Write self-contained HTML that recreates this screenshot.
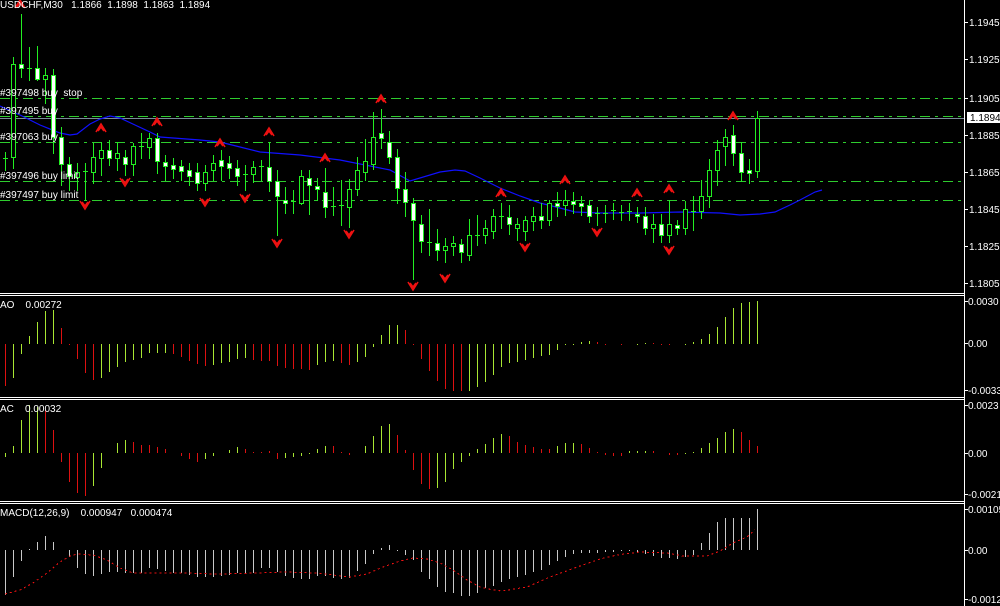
<!DOCTYPE html>
<html><head><meta charset="utf-8">
<style>
html,body{margin:0;padding:0;background:#000;width:1000px;height:606px;overflow:hidden}
svg{display:block}
text{font-family:"Liberation Sans",sans-serif;font-size:10px;fill:#fff;white-space:pre}
</style></head>
<body>
<svg id="s" width="1000" height="606" viewBox="0 0 1000 606" xmlns="http://www.w3.org/2000/svg" shape-rendering="crispEdges" xml:space="preserve">
<rect width="1000" height="606" fill="#000"/>
<g id="g"></g>
<text x="0" y="8">USDCHF,M30   1.1866  1.1898  1.1863  1.1894</text>
<g>
<text x="0" y="96">#397498 buy  stop</text>
<text x="0" y="114">#397495 buy</text>
<text x="0" y="140">#397063 buy</text>
<text x="0" y="179">#397496 buy limit</text>
<text x="0" y="198">#397497 buy limit</text>
<text x="0" y="308">AO    0.00272</text>
<text x="0" y="412">AC    0.00032</text>
<text x="0" y="516">MACD(12,26,9)    0.000947   0.000474</text>
</g>
<rect x="967" y="112" width="33" height="11" fill="#fff"/>
<text x="970" y="121">1.1894</text>
<g>
<text x="969" y="26">1.1945</text>
<text x="969" y="63">1.1925</text>
<text x="969" y="102">1.1905</text>
<text x="969" y="139">1.1885</text>
<text x="969" y="176">1.1865</text>
<text x="969" y="213">1.1845</text>
<text x="969" y="250">1.1825</text>
<text x="969" y="287">1.1805</text>
<text x="968" y="305">0.0030</text>
<text x="968" y="347">0.00</text>
<text x="968" y="394">-0.0033</text>
<text x="968" y="409">0.0023</text>
<text x="968" y="457">0.00</text>
<text x="968" y="498">-0.0021</text>
<text x="968" y="513">0.00105</text>
<text x="968" y="554">0.00</text>
<text x="968" y="603">-0.0012</text>
</g>
</svg>
<script>
document.querySelectorAll('text')[document.querySelectorAll('text').length-18].style.fill='#000';
var g=document.getElementById('g'),h='';
function L(x1,y1,x2,y2,c,extra){h+='<line x1="'+x1+'" y1="'+y1+'" x2="'+x2+'" y2="'+y2+'" stroke="'+c+'" stroke-width="1" '+(extra||'')+'/>';}
[293.5,295.5,397.5,399.5,501.5,503.5].forEach(function(y){L(0,y,964,y,'#fff');});
L(964.5,0,964.5,606,'#fff');
[22,59,98,135,172,209,246,283,301,343,390,405,453,494,509,550,599].forEach(function(y){L(965,y+0.5,968,y+0.5,'#fff');});
[98,116,142,181,200].forEach(function(y){L(0,y+0.5,964,y+0.5,'#2ecc2e','stroke-dasharray="10 5 3 5"');});
L(0,118.5,964,118.5,'#7a8a9a');
var ma=[[0,106],[20,115],[40,125],[60,133],[70,135],[77,134],[90,124],[100,119],[110,116],[120,118],[135,125],[150,132],[160,137],[200,140],[220,142],[240,147],[260,152],[300,155],[340,160],[390,170],[410,181],[440,172],[455,170],[465,171],[480,178],[500,188],[520,196],[540,203],[560,208],[575,212],[600,213],[640,213],[680,212],[720,213],[740,215],[760,214],[775,212],[790,205],[800,200],[815,192],[822,190]];
h+='<polyline fill="none" stroke="#1010ff" stroke-width="1.2" shape-rendering="auto" points="'+ma.map(function(p){return p.join(',')}).join(' ')+'"/>';
var C=[['d',158,158,152,170],['b',64,157,57,168],['w',64,68,14,77],['d',68,68,47,80],['w',68,79,46,80],['b',75,79,68,103],['w',75,137,69,153],['w',137,164,127,185],['w',164,176,157,190],['b',172,177,163,190],['d',171,171,163,200],['b',157,172,143,183],['b',150,158,142,175],['w',150,158,140,165],['b',153,158,142,170],['w',157,164,150,175],['b',146,164,143,175],['d',146,146,133,158],['b',138,147,133,158],['w',138,161,133,173],['w',162,166,155,180],['w',165,169,158,178],['w',166,171,160,180],['w',170,176,163,185],['w',172,183,163,190],['b',172,183,165,190],['b',163,170,155,180],['w',160,166,150,180],['w',163,168,156,178],['w',168,176,160,185],['d',174,174,165,190],['b',167,174,161,182],['d',166,166,160,180],['w',167,181,142,191],['w',181,196,170,235],['w',200,203,187,213],['d',201,201,190,213],['b',176,203,170,204],['w',178,185,170,214],['w',186,189,178,200],['w',192,207,168,217],['d',206,206,187,215],['d',205,205,180,225],['b',189,207,179,227],['b',170,189,157,195],['b',161,172,139,180],['b',137,164,112,169],['w',133,138,109,148],['w',142,157,131,163],['w',157,188,149,203],['w',189,202,172,216],['w',203,220,198,279],['w',224,241,215,252],['d',242,242,209,255],['w',243,250,229,260],['b',246,250,238,262],['b',243,246,236,255],['w',244,252,239,262],['b',235,255,219,260],['d',235,235,215,245],['b',228,235,220,243],['b',216,231,209,238],['d',216,216,203,228],['w',217,224,205,234],['b',224,228,218,240],['b',220,231,216,240],['b',216,221,207,230],['w',216,220,203,228],['b',203,220,200,225],['w',203,206,192,216],['b',200,205,190,215],['w',201,204,192,213],['w',203,206,196,215],['w',205,216,200,222],['d',213,213,207,225],['d',213,213,205,222],['d',210,210,203,219],['d',212,212,205,220],['d',211,211,203,220],['w',214,216,207,222],['w',216,228,207,234],['b',224,228,214,242],['w',224,235,214,242],['b',224,235,200,242],['w',225,228,220,234],['b',209,228,201,234],['d',211,211,196,230],['b',196,211,180,218],['b',170,196,159,207],['b',150,170,140,185],['b',137,146,129,165],['w',135,153,125,165],['w',153,172,142,181],['w',170,173,159,183],['b',118,171,111,177]];
var G='#22ee22';
C.forEach(function(c,i){var x=5+8*i;L(x+0.5,c[3],x+0.5,c[4]+1,G);
 if(c[0]=='d'){L(x-2,c[1]+0.5,x+3,c[1]+0.5,G);}
 else h+='<rect x="'+(x-1.5)+'" y="'+(c[1]+0.5)+'" width="4" height="'+(c[2]-c[1])+'" fill="'+(c[0]=='w'?'#fff':'#000')+'" stroke="'+G+'" stroke-width="1"/>';});
var up=[[20,4],[101,128],[157,122],[220,143],[269,132],[325,158],[381,99],[501,193],[565,180],[637,193],[669,189],[733,116]];
var dn=[[85,205],[125,182],[205,202],[245,198],[277,243],[349,234],[413,286],[445,278],[525,247],[597,232],[669,250]];
up.forEach(function(p){var x=p[0],y=p[1];h+='<path shape-rendering="auto" fill="none" stroke="#ee1111" stroke-width="1.6" d="M'+(x-5)+' '+(y+4)+' L'+x+' '+(y-4)+' L'+(x+5)+' '+(y+4)+' M'+(x-3)+' '+(y+3)+' L'+x+' '+(y-1)+' L'+(x+3)+' '+(y+3)+'"/>';});
dn.forEach(function(p){var x=p[0],y=p[1];h+='<path shape-rendering="auto" fill="none" stroke="#ee1111" stroke-width="1.6" d="M'+(x-5)+' '+(y-4)+' L'+x+' '+(y+4)+' L'+(x+5)+' '+(y-4)+' M'+(x-3)+' '+(y-3)+' L'+x+' '+(y+1)+' L'+(x+3)+' '+(y-3)+'"/>';});
var GR='#a8e632',RD='#dd1111';
var ao='r386 g378 g354 g336 g322 g311 g310 r328 r345 r359 r373 r380 g378 g372 g367 g362 g360 g358 g353 g353 g353 r354 r357 r361 r364 r366 g365 g363 g362 g359 g358 r360 r361 r361 r366 r368 r369 r369 r370 g365 g362 g361 r363 r365 g362 g357 g347 g335 g325 g325 r330 r345 r359 r371 r381 r389 r391 r391 g391 g387 g382 g375 g367 g363 g362 g360 g358 g356 g355 g350 g345 g345 g342 g341 r342 r345 r344 r345 r344 g345 g343 r343 r345 r345 r344 g345 g342 g339 g334 g327 g317 g308 g303 g302 g301'.split(' ');
ao.forEach(function(v,i){var x=5+8*i+0.5,y=+v.slice(1);if(Math.abs(y-344)<1)return;L(x,344,x,y,v[0]=='g'?GR:RD);});
var ac='g457 g446 g420 g405 g407 r410 r430 r462 r482 r493 r496 g486 g468 g453 g443 g440 r442 r445 r445 r447 r449 r453 r456 r459 r462 g459 g456 g453 g450 g447 r449 r452 r452 r451 r459 g458 g457 g456 g454 g449 g446 r446 r452 r455 g453 g446 g436 g426 g424 r435 r450 r470 r484 r489 g488 g482 g469 g462 g456 g449 g444 g438 g434 r436 r442 r445 r447 r449 r449 g446 g443 g443 r444 r448 r452 r455 r456 r456 g451 g451 g451 r451 r453 r455 r455 g454 g452 g448 g443 g438 g432 g429 r432 r440 r446'.split(' ');
ac.forEach(function(v,i){var x=5+8*i+0.5,y=+v.slice(1);if(Math.abs(y-453)<1)return;L(x,453,x,y,v[0]=='g'?GR:RD);});
var md=[595,577,561,549,542,536,542,550,557,568,574,576,574,572,572,573,573,573,568,569,571,573,573,575,577,577,577,576,575,573,573,573,568,568,572,576,578,579,579,576,576,578,579,578,571,564,554,548,545,551,555,560,572,579,587,592,593,596,596,593,588,586,582,579,577,575,572,570,565,561,557,554,553,553,553,552,552,551,551,552,554,556,558,558,559,557,555,543,533,522,518,518,518,518,509];
md.forEach(function(y,i){var x=5+8*i+0.5;if(Math.abs(y-550)<1)return;L(x,550,x,y,'#c8c8c8');});
var sg=[[5,594],[20,590],[33,583],[47,573],[60,562],[70,556],[77,554],[93,555],[107,560],[120,568],[133,573],[167,573],[187,573],[217,574],[257,573],[283,572],[317,573],[333,575],[350,577],[367,574],[383,567],[400,561],[413,558],[427,559],[440,563],[453,570],[467,580],[480,587],[493,590],[502,591],[527,587],[550,577],[580,566],[600,559],[617,555],[640,552],[667,553],[683,556],[707,556],[720,551],[733,543],[747,537],[755,530]];
h+='<polyline fill="none" stroke="#ee1111" stroke-width="1" stroke-dasharray="2 3" points="'+sg.map(function(p){return p.join(',')}).join(' ')+'"/>';
g.innerHTML=h;
</script>
</body></html>
